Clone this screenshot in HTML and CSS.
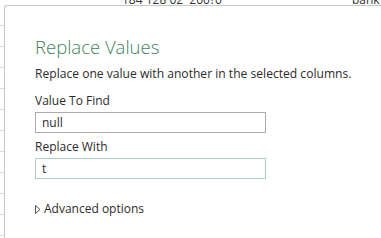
FILE: index.html
```html
<!DOCTYPE html>
<html>
<head>
<meta charset="utf-8">
<link rel="stylesheet" href="styles.css">
</head>
<body>
<div class="sheet">
  <div class="sheet-top">
    <span class="cell-a">184 128 02&nbsp;&nbsp;200?0</span>
    <span class="cell-b">bank</span>
  </div>
  <div class="sheet-left"></div>
</div>
<div class="dialog">
  <h1 class="title">Replace Values</h1>
  <p class="desc">Replace one value with another in the selected columns.</p>
  <label class="label">Value To Find</label>
  <div class="field">null</div>
  <label class="label second">Replace With</label>
  <div class="field focused">t</div>
  <div class="advanced">
    <svg class="tri" width="6" height="9" viewBox="0 0 6 9"><path d="M0.5 0.5 L5 4.5 L0.5 8.5 Z" fill="none" stroke="#555" stroke-width="1"/></svg>
    <span>Advanced options</span>
  </div>
</div>
</body>
</html>
```
FILE: styles.css
```css
html, body {
  margin: 0;
  padding: 0;
  width: 381px;
  height: 238px;
  overflow: hidden;
  background: #fff;
  font-family: "Open Sans", "Noto Sans", sans-serif;
}
.sheet {
  position: relative;
  width: 381px;
  height: 238px;
}
.sheet-top {
  height: 5px;
  overflow: hidden;
  position: relative;
  font-size: 12px;
  color: #333;
}
.cell-a {
  position: absolute;
  left: 122px;
  top: -9px;
}
.cell-b {
  position: absolute;
  left: 352px;
  top: -9px;
}
.sheet-left {
  position: absolute;
  left: 0;
  top: 5px;
  width: 4px;
  height: 233px;
  background: repeating-linear-gradient(to bottom, #fff 0, #fff 20px, #d8d8d8 20px, #d8d8d8 21px);
  border-right: 1px solid #e4e4e4;
}
.dialog {
  position: absolute;
  left: 4px;
  top: 5px;
  right: 0;
  bottom: 0;
  background: #fff;
  border-top: 1px solid #c8c8c8;
  border-left: 1px solid #c8c8c8;
  border-top-left-radius: 4px;
  padding: 28px 0 0 30px;
  box-sizing: border-box;
}
.title {
  margin: 0;
  font-size: 18.5px;
  font-weight: 300;
  color: #3f7f62;
  line-height: 26px;
}
.desc {
  margin: 6px 0 0;
  font-size: 12.1px;
  color: #2b2b2b;
  line-height: 16px;
}
.label {
  display: block;
  margin-top: 11px;
  font-size: 12px;
  color: #2b2b2b;
  line-height: 16px;
}
.label.second {
  margin-top: 6px;
}
.field {
  margin-top: 3px;
  box-sizing: border-box;
  width: 231px;
  height: 21px;
  border: 1px solid #ababab;
  font-size: 12px;
  line-height: 19px;
  padding-left: 6px;
  color: #2b2b2b;
}
.field.focused {
  border-color: #a9d2c1;
}
.advanced {
  margin-top: 22px;
  display: flex;
  align-items: center;
  gap: 3px;
  font-size: 12px;
  color: #2b2b2b;
  line-height: 16px;
}
.tri {
  display: block;
}
```
